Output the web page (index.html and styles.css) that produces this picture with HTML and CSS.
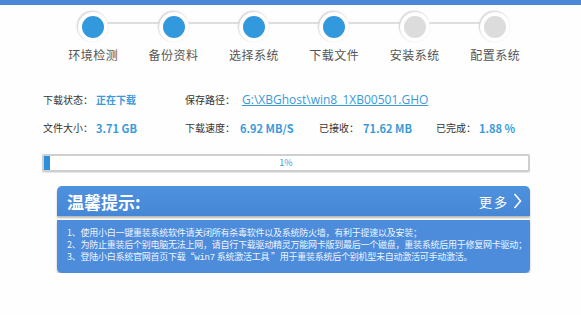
FILE: index.html
```html
<!DOCTYPE html>
<html lang="zh-CN">
<head>
  <meta charset="utf-8">
  <link rel="stylesheet" href="styles.css">
</head>
<body>

<div class="topbar"></div>

<ul class="steps">
  <li class="step done"><span class="dot"></span><span class="stepT">环境检测</span></li>
  <li class="step done"><span class="dot"></span><span class="stepT">备份资料</span></li>
  <li class="step done"><span class="dot"></span><span class="stepT">选择系统</span></li>
  <li class="step done"><span class="dot"></span><span class="stepT">下载文件</span></li>
  <li class="step"><span class="dot"></span><span class="stepT">安装系统</span></li>
  <li class="step"><span class="dot"></span><span class="stepT">配置系统</span></li>
</ul>

<div class="info">
  <span class="lab">下载状态：</span><span class="val">正在下载</span>
  <span class="lab">保存路径：</span><a class="path" href="#">G:\XBGhost\win8_1XB00501.GHO</a>

  <span class="lab">文件大小：</span><span class="val num">3.71 GB</span>
  <span class="lab">下载速度：</span><span class="val num">6.92 MB/S</span>
  <span class="lab">已接收：</span><span class="val num">71.62 MB</span>
  <span class="lab">已完成：</span><span class="val num">1.88 %</span>
</div>

<div class="bar">
  <div class="barFill" style="width: 1%"></div>
  <span class="barT">1%</span>
</div>

<div class="tips">
  <div class="tipsHead">
    <span class="tipsTitle">温馨提示:</span>
    <a class="more" href="#">更多
      <svg width="9" height="16" viewBox="0 0 9 16"><path d="M1.5 1 L7.5 8 L1.5 15" fill="none" stroke="#fff" stroke-width="1.6"/></svg>
    </a>
  </div>
  <div class="tipsBody">
    <p>1、使用小白一键重装系统软件请关闭所有杀毒软件以及系统防火墙，有利于提速以及安装；</p>
    <p>2、为防止重装后个别电脑无法上网，请自行下载驱动精灵万能网卡版到最后一个磁盘，重装系统后用于修复网卡驱动；</p>
    <p>3、登陆小白系统官网首页下载“<span class="mono">win7</span> 系统激活工具 ”用于重装系统后个别机型未自动激活可手动激活。</p>
  </div>
</div>

</body>
</html>
```

FILE: styles.css
```css
body {
  margin: 0;
  background: #fefefe;
  font-family: "Noto Sans CJK SC", "Noto Sans", sans-serif;
  color: #333;
  overflow: hidden;
}

.topbar {
  height: 5px;
  background: #4a87d6;
}

.steps {
  position: relative;
  display: flex;
  list-style: none;
  margin: 0;
  padding: 7px 0 0 53px;
}

/* 灰色連接線 */
.steps::before {
  content: "";
  position: absolute;
  left: 100px;
  width: 390px;
  top: 17px;
  height: 2px;
  background: #dedede;
}

.step {
  width: 80.4px;
  display: flex;
  flex-direction: column;
  align-items: center;
  position: relative;
}

.dot {
  width: 22px;
  height: 22px;
  border-radius: 50%;
  background: #dcdcdc;
  border: 4px solid #fff;
  box-shadow: -1px -1px 2px #cfcfcf, 0 0 1px #e0e0e0;
}

.done .dot {
  background: #3399dd;
}

.stepT {
  margin-top: 5px;
  font-size: 12px;
  line-height: 16px;
  color: #555;
  letter-spacing: 0.5px;
}

.info {
  display: grid;
  grid-template-columns: 53px 89px 55px 79px 44px 73px 43px auto;
  row-gap: 12px;
  padding: 29px 0 0 43px;
  font-size: 10px;
  line-height: 16px;
  white-space: nowrap;
}

.lab {
  color: #333;
}

.val {
  color: #3a9ad9;
  font-weight: bold;
}

.num {
  font-size: 11px;
}

.path {
  grid-column: 4 / span 5;
  color: #3a9ad9;
  font-family: "Open Sans", sans-serif;
  font-size: 12px;
  margin-left: 2px;
}

.bar {
  position: relative;
  margin: 18px 0 0 42px;
  width: 484px;
  height: 14px;
  border: 2px solid #cfcfcf;
  border-radius: 2px;
  background: #fff;
  box-shadow: 0 1px 1px #e5e5e5;
}

.barFill {
  height: 100%;
  min-width: 6px;
  background: #2e8fdc;
}

.barT {
  position: absolute;
  left: 0;
  right: 0;
  top: 0;
  text-align: center;
  font-size: 9px;
  line-height: 14px;
  color: #3a9ad9;
}

.tips {
  margin: 14px 0 0 57px;
  width: 473px;
}

.tipsHead {
  display: flex;
  justify-content: space-between;
  align-items: center;
  height: 30px;
  padding: 0 8px 0 10px;
  background: linear-gradient(#4e92de, #4686d6);
  border-radius: 5px 5px 0 0;
  box-shadow: 0 2px 2px #b8b8b8;
}

.tipsTitle {
  color: #fff;
  font-size: 17px;
  font-weight: bold;
}

.more {
  display: flex;
  align-items: center;
  gap: 4px;
  color: #fff;
  text-decoration: none;
  font-size: 13px;
  letter-spacing: 2px;
}

.tipsBody {
  margin-top: 4px;
  padding: 7px 4px 9px 10px;
  background: #4c8cdb;
  border-radius: 0 0 5px 5px;
  box-shadow: 0 2px 2px #b0b0b0;
  color: #eef4ff;
  font-size: 9px;
  line-height: 12px;
  white-space: nowrap;
  letter-spacing: -0.25px;
}

.tipsBody p {
  margin: 0;
}

.mono {
  font-family: "Liberation Mono", monospace;
}
```
